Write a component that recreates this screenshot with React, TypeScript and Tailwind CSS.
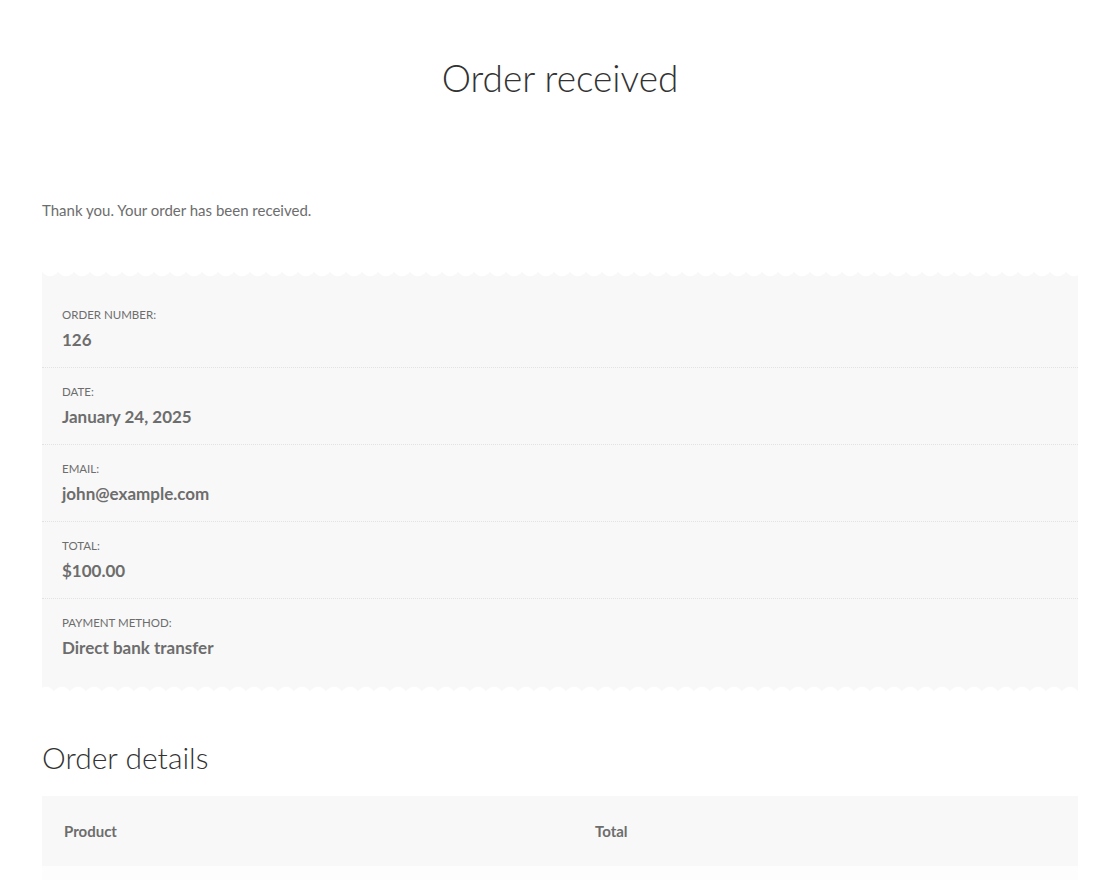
const rows = [
  { label: 'Order number:', value: '126' },
  { label: 'Date:', value: 'January 24, 2025' },
  { label: 'Email:', value: 'john@example.com' },
  { label: 'Total:', value: '$100.00' },
  { label: 'Payment method:', value: 'Direct bank transfer' },
];

// scalloped receipt edge, flip for the bottom
function Scallop({ flip }: { flip?: boolean }) {
  const id = flip ? 'scallop-b' : 'scallop-t';
  return (
    <svg className={`block w-full h-[8px] ${flip ? 'rotate-180' : ''}`} preserveAspectRatio="none">
      <defs>
        <pattern id={id} width="16" height="8" patternUnits="userSpaceOnUse">
          <rect width="16" height="8" fill="#f8f8f8" />
          <circle cx="8" cy="-4" r="9.2" fill="#ffffff" />
        </pattern>
      </defs>
      <rect width="100%" height="8" fill={`url(#${id})`} />
    </svg>
  );
}

export default function App() {
  return (
    <div className="min-h-[880px] bg-white text-[#6d6d6d] font-['Lato','Liberation_Sans',sans-serif]">
      <div className="px-[42px]">
        <h1 className="pt-[54px] text-center text-[37px] leading-[48px] font-light text-[#333333]">
          Order received
        </h1>

        <p className="mt-[96px] text-[15px] leading-6">Thank you. Your order has been received.</p>

        <div className="mt-[49px]">
          <Scallop />
          <ul className="bg-[#f8f8f8] pt-[12px] pb-[8px]">
            {rows.map((r, i) => (
              <li
                key={r.label}
                className={`px-5 pt-4 ${i < rows.length - 1 ? 'pb-[15px] border-b border-dotted border-[#e2e2e2]' : 'pb-4'}`}
              >
                <p className="text-[11.5px] leading-4 uppercase">{r.label}</p>
                <p className="mt-[5px] text-[17px] leading-6 font-bold">{r.value}</p>
              </li>
            ))}
          </ul>
          <Scallop flip />
        </div>

        <h2 className="mt-[45px] text-[30px] leading-[40px] font-light text-[#333333]">Order details</h2>

        <div className="mt-[19px]">
          <div className="grid grid-cols-2 bg-[#f8f8f8] h-[70px] items-center px-[22px] text-[15px] font-bold">
            <span>Product</span>
            <span className="pl-[35px]">Total</span>
          </div>
          <div className="h-[20px] bg-[#fdfdfd]" />
        </div>
      </div>
    </div>
  );
}
